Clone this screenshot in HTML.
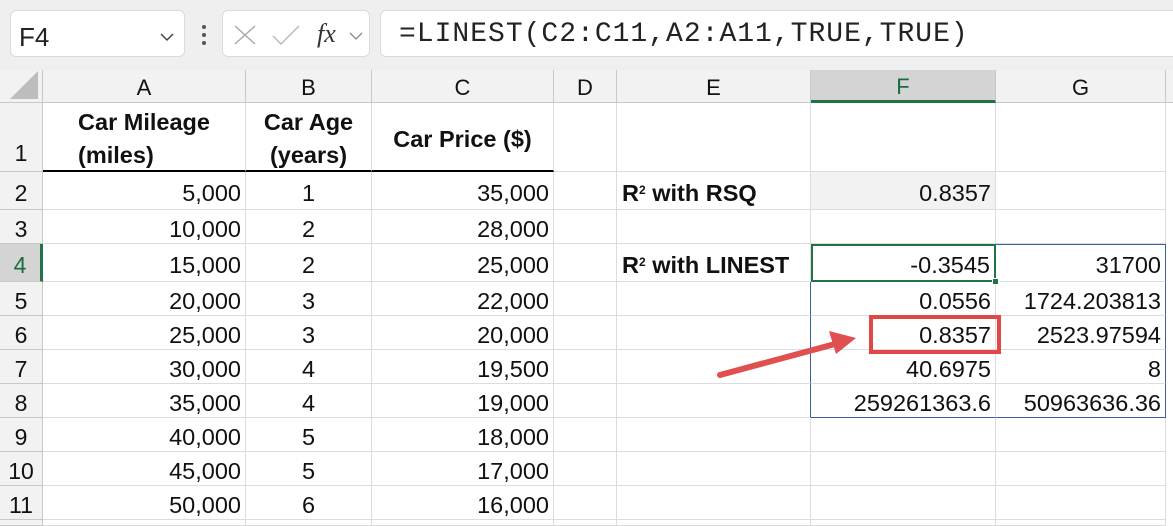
<!DOCTYPE html>
<html><head><meta charset="utf-8"><style>
*{box-sizing:border-box;margin:0;padding:0}
body{width:1173px;height:524px;overflow:hidden;background:#fff;font-family:"Liberation Sans",Arial,sans-serif;position:relative}
.tb{position:absolute;left:0;top:0;width:1173px;height:70px;background:#efefef}
.box{position:absolute;background:#fff;border:1px solid #dadada;border-radius:6px}
.g{position:absolute;left:0;top:70px;display:grid;grid-template-columns:43px 203px 126px 182px 63px 194px 185px 170px 7px;grid-template-rows:33px 69px 38px 34px 38px 34px 34px 34px 34px 34px 34px 34px 4px}
.g div{border-right:1px solid #dcdcdc;border-bottom:1px solid #dcdcdc;font-size:23.5px;display:flex;align-items:center;justify-content:flex-end;padding-right:4px;padding-top:5px;color:#111;white-space:nowrap}
.g .h{background:#f2f2f2;justify-content:center;padding:4px 0 0 0;border-color:#c8c8c8;font-size:22px}
.g .r{background:#f2f2f2;justify-content:center;padding:5px 0 0 0;border-color:#c8c8c8;font-size:23px}
.g .c{justify-content:center;padding-right:0}
.g .b{font-weight:bold}
.g .l{justify-content:flex-start;padding-left:5px}
.g .t{border-bottom:2px solid #000}
</style></head><body>
<div class="tb">
 <div class="box" style="left:10px;top:10px;width:175px;height:47px"><span style="position:absolute;left:8px;top:11px;font-size:26px;color:#222">F4</span><svg style="position:absolute;left:148px;top:21px" width="16" height="10"><path d="M2 2 L8 8 L14 2" stroke="#444" stroke-width="1.5" fill="none"/></svg></div>
 <svg style="position:absolute;left:200px;top:24px" width="8" height="22"><circle cx="4" cy="3" r="2" fill="#555"/><circle cx="4" cy="11" r="2" fill="#555"/><circle cx="4" cy="19" r="2" fill="#555"/></svg>
 <div class="box" style="left:222px;top:10px;width:148px;height:47px">
  <svg style="position:absolute;left:10px;top:13px" width="24" height="22"><path d="M2 2 L22 20 M22 2 L2 20" stroke="#aaa" stroke-width="1.5"/></svg>
  <svg style="position:absolute;left:48px;top:13px" width="30" height="22"><path d="M2 12 L10 20 L28 2" stroke="#bbb" stroke-width="1.5" fill="none"/></svg>
  <span style="position:absolute;left:94px;top:8px;font-family:'Liberation Serif',serif;font-style:italic;font-size:26px;color:#333">fx</span>
  <svg style="position:absolute;left:126px;top:21px" width="14" height="9"><path d="M1 1 L7 7 L13 1" stroke="#888" stroke-width="1.3" fill="none"/></svg>
 </div>
 <div class="box" style="left:380px;top:10px;width:800px;height:47px"><span style="position:absolute;left:18px;top:8px;font-family:'Liberation Mono',monospace;font-size:28px;letter-spacing:1px;color:#222">=LINEST(C2:C11,A2:A11,TRUE,TRUE)</span></div>
</div>
<div class="g">
<div class="h" style="position:relative"><svg style="position:absolute;right:4px;bottom:3px" width="28" height="28"><path d="M28 0 L28 28 L0 28Z" fill="#bdbdbd"/></svg></div><div class="h">A</div><div class="h">B</div><div class="h">C</div><div class="h">D</div><div class="h">E</div><div class="h" style="background:#d4d4d4;border-bottom:3px solid #217346;color:#1e6b3e">F</div><div class="h">G</div><div class="h" style="border-right:0"></div>

<div class="r" style="align-items:flex-end;padding-bottom:4px">1</div><div class="b c t" style="flex-direction:column;line-height:33px">Car Mileage<br>(miles)</div><div class="b c t" style="flex-direction:column;line-height:33px;text-align:center">Car Age<br>(years)</div><div class="b c t">Car Price ($)</div><div></div><div></div><div></div><div></div><div style="border:0"></div>

<div class="r">2</div><div>5,000</div><div class="c">1</div><div>35,000</div><div></div><div class="b l">R<sup style="font-size:12px;position:relative;top:-3px">2</sup>&nbsp;with RSQ</div><div style="background:#f2f2f2">0.8357</div><div></div><div style="border:0"></div>

<div class="r">3</div><div>10,000</div><div class="c">2</div><div>28,000</div><div></div><div></div><div></div><div></div><div style="border:0"></div>

<div class="r" style="background:#d4d4d4;border-right:3px solid #217346;color:#1e6b3e">4</div><div>15,000</div><div class="c">2</div><div>25,000</div><div></div><div class="b l">R<sup style="font-size:12px;position:relative;top:-3px">2</sup>&nbsp;with LINEST</div><div style="position:relative;border:2px solid #217346">-0.3545<span style="position:absolute;right:-5px;bottom:-5px;width:7px;height:7px;background:#217346;border:1px solid #fff"></span></div><div style="border-top:1px solid #3a5fa0;border-right:1px solid #3a5fa0">31700</div><div style="border:0"></div>

<div class="r">5</div><div>20,000</div><div class="c">3</div><div>22,000</div><div></div><div style="border-right:1px solid #3a5fa0"></div><div>0.0556</div><div style="border-right:1px solid #3a5fa0">1724.203813</div><div style="border:0"></div>

<div class="r">6</div><div>25,000</div><div class="c">3</div><div>20,000</div><div></div><div style="border-right:1px solid #3a5fa0"></div><div>0.8357</div><div style="border-right:1px solid #3a5fa0">2523.97594</div><div style="border:0"></div>

<div class="r">7</div><div>30,000</div><div class="c">4</div><div>19,500</div><div></div><div style="border-right:1px solid #3a5fa0"></div><div>40.6975</div><div style="border-right:1px solid #3a5fa0">8</div><div style="border:0"></div>

<div class="r">8</div><div>35,000</div><div class="c">4</div><div>19,000</div><div></div><div style="border-right:1px solid #3a5fa0"></div><div style="border-bottom:1px solid #3a5fa0">259261363.6</div><div style="border-right:1px solid #3a5fa0;border-bottom:1px solid #3a5fa0">50963636.36</div><div style="border:0"></div>

<div class="r">9</div><div>40,000</div><div class="c">5</div><div>18,000</div><div></div><div></div><div></div><div></div><div style="border:0"></div>
<div class="r">10</div><div>45,000</div><div class="c">5</div><div>17,000</div><div></div><div></div><div></div><div></div><div style="border:0"></div>
<div class="r">11</div><div>50,000</div><div class="c">6</div><div>16,000</div><div></div><div></div><div></div><div></div><div style="border:0"></div>
<div class="r"></div><div></div><div></div><div></div><div></div><div></div><div></div><div></div><div style="border:0"></div>
</div>
<div style="position:absolute;left:869px;top:315px;width:132px;height:39px;border:4px solid #e04848"></div>
<svg style="position:absolute;left:0;top:0" width="1173" height="524"><path d="M720 375 L835 344" stroke="#e05050" stroke-width="6" stroke-linecap="round"/><path d="M856 338 L829 331 L836 354 Z" fill="#e05050"/></svg>
</body></html>
